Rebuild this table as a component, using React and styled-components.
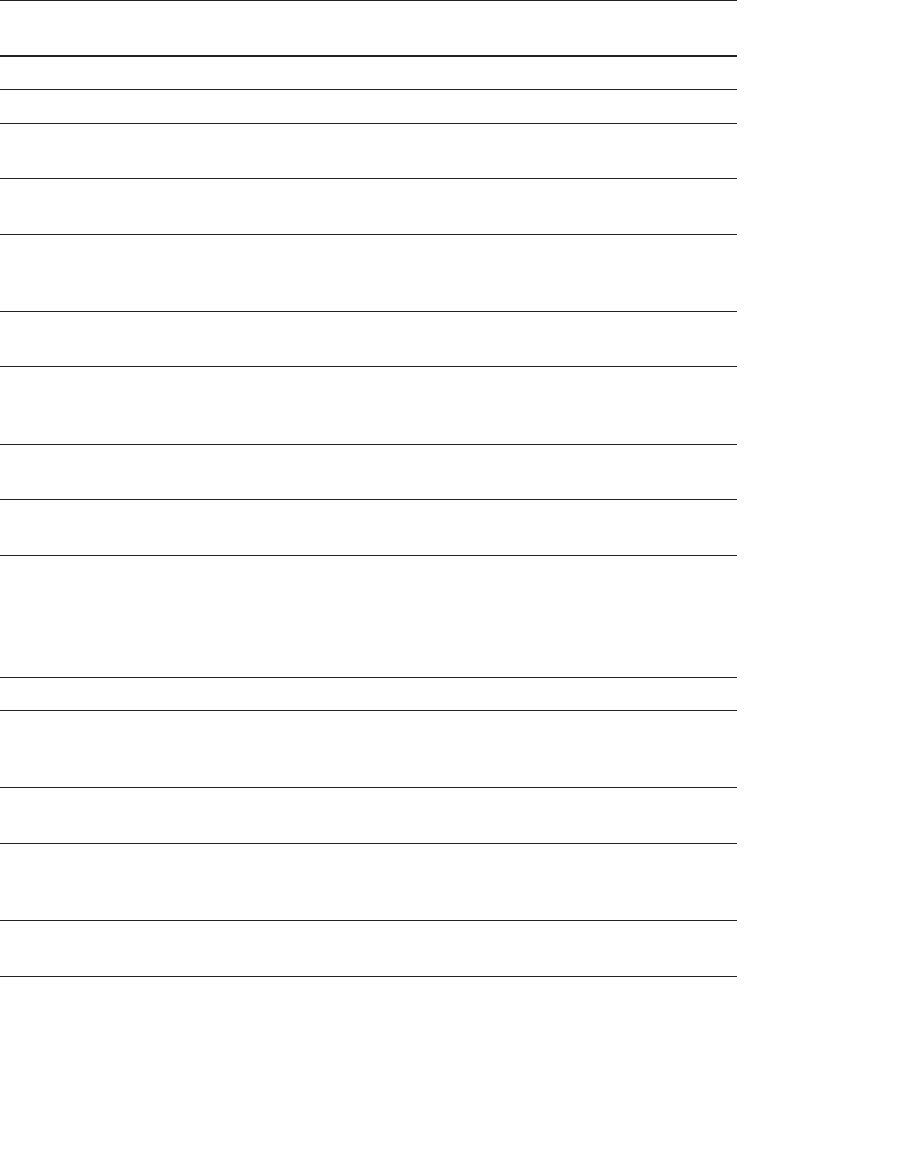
import styled, { createGlobalStyle } from 'styled-components';

const GlobalStyle = createGlobalStyle`
  html, body {
    margin: 0;
    padding: 0;
    background: #ffffff;
    font-family: "Liberation Sans", Arial, sans-serif;
  }
`;

const Page = styled.div`
  width: 917px;
  min-height: 1174px;
  background: #ffffff;
`;

const Table = styled.div`
  width: 737px;
  display: flex;
  flex-direction: column;
`;

const HeadRow = styled.div`
  box-sizing: border-box;
  height: 57px;
  border-top: 1px solid #222;
  border-bottom: 2px solid #222;
`;

const Row = styled.div`
  box-sizing: border-box;
  height: ${props => props.$h}px;
  border-bottom: 1px solid #222;
`;

// row heights measured line to line, border included
const rows = [33, 34, 55, 56, 77, 55, 78, 55, 56, 122, 33, 77, 56, 77, 56];

export default function App() {
  return (
    <>
      <GlobalStyle />
      <Page>
        <Table>
          <HeadRow />
          {rows.map((h, i) => (
            <Row key={i} $h={h} />
          ))}
        </Table>
      </Page>
    </>
  );
}
